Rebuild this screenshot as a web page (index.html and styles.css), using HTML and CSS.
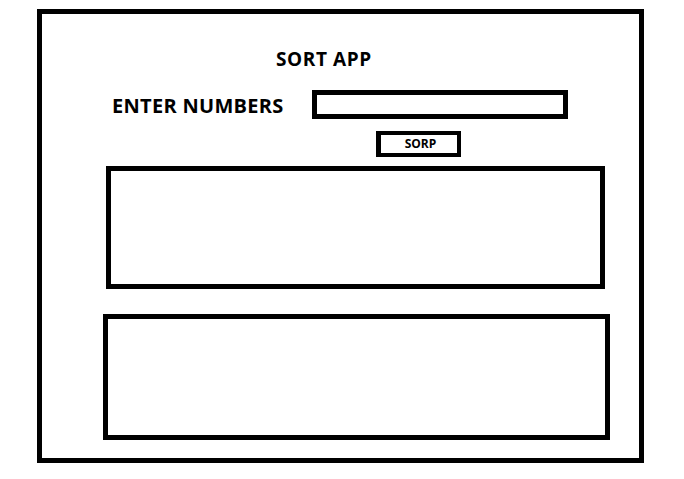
FILE: index.html
```html
<!DOCTYPE html>
<html lang="en">
<head>
<meta charset="utf-8">
<title>Sort App</title>
<link rel="stylesheet" href="styles.css">
</head>
<body>
<div class="frame">
  <h1 class="title">SORT APP</h1>
  <div class="entry-row">
    <label class="entry-label" for="nums">ENTER NUMBERS</label>
    <input class="entry-input" id="nums" type="text">
  </div>
  <button class="sort-btn" type="button">SORP</button>
  <div class="panel panel-input"></div>
  <div class="panel panel-output"></div>
</div>
</body>
</html>
```
FILE: styles.css
```css
html, body {
  margin: 0;
  padding: 0;
  background: #ffffff;
}

body {
  width: 684px;
  height: 479px;
  overflow: hidden;
  font-family: "Open Sans", "Liberation Sans", sans-serif;
  color: #000;
}

.frame {
  box-sizing: border-box;
  margin: 9px 0 0 37px;
  width: 607px;
  height: 454px;
  border: 5px solid #000;
  display: flex;
  flex-direction: column;
  align-items: flex-start;
}

.title {
  margin: 33px 0 0 234px;
  font-size: 19px;
  line-height: 24px;
  font-weight: 700;
  letter-spacing: 0.6px;
}

.entry-row {
  margin: 19px 0 0 70px;
  display: flex;
  align-items: flex-start;
  height: 29px;
}

.entry-label {
  width: 200px;
  margin-top: 1px;
  font-size: 20px;
  line-height: 29px;
  font-weight: 700;
  letter-spacing: 0.3px;
}

.entry-input {
  box-sizing: border-box;
  width: 256px;
  height: 29px;
  margin: 0;
  padding: 0;
  border: 5px solid #000;
  border-radius: 0;
  background: #fff;
  outline: none;
}

.sort-btn {
  box-sizing: border-box;
  margin: 12px 0 0 334px;
  width: 85px;
  height: 26px;
  padding: 0 0 0 3px;
  border-style: solid;
  border-color: #000;
  border-width: 4px 4px 4px 5px;
  border-radius: 0;
  background: #fff;
  font-family: "Open Sans", "Liberation Sans", sans-serif;
  font-size: 12px;
  font-weight: 700;
  color: #000;
  line-height: 16px;
}

.panel {
  box-sizing: border-box;
  border: 5px solid #000;
  background: #fff;
}

.panel-input {
  margin: 9px 0 0 64px;
  width: 499px;
  height: 123px;
}

.panel-output {
  margin: 25px 0 0 61px;
  width: 507px;
  height: 126px;
}
```
